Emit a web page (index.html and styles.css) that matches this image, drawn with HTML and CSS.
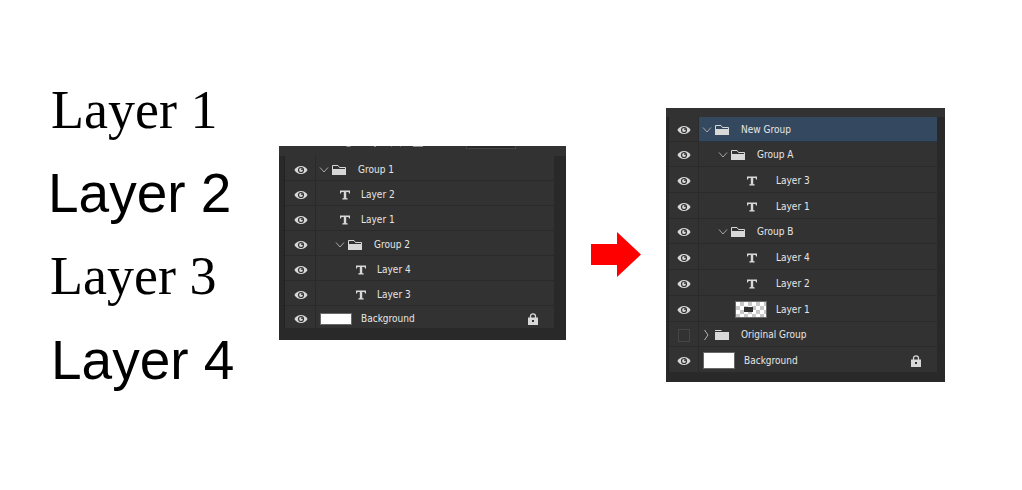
FILE: index.html
```html
<!DOCTYPE html>
<html lang="en">
<head>
<meta charset="utf-8">
<title>Layer groups</title>
<link rel="stylesheet" href="styles.css">
</head>
<body>
<svg class="defs" aria-hidden="true">
  <symbol id="eye" viewBox="0 0 14 10"><path fill="#d8d8d8" d="M.4 5C2 2.200 4.200 1 7 1S12 2.200 13.600 5C12 7.800 9.800 9 7 9S2 7.800.4 5Z"/><circle cx="7" cy="5" r="2.500" fill="#d8d8d8" stroke="#323232" stroke-width="1.200"/><circle cx="8" cy="4.200" r=".9" fill="#323232"/></symbol>
  <symbol id="down" viewBox="0 0 10 8"><path fill="none" stroke="#a8a8a8" d="M1 1.500 5 6 9 1.500"/></symbol>
  <symbol id="right" viewBox="0 0 10 12"><path fill="none" stroke="#b4b4b4" d="M2.500 1 6 6 2.500 11"/></symbol>
  <symbol id="open" viewBox="0 0 15 12"><path fill="none" stroke="#d8d8d8" d="M.5 11V1.500H6L7.500 3.500H13.500V11"/><path fill="#d8d8d8" d="M0 5h14v6H0z"/></symbol>
  <symbol id="closed" viewBox="0 0 15 12"><path fill="#d8d8d8" d="M0 1h6l1 1H0zM0 3h14v8H0z"/></symbol>
  <symbol id="type" viewBox="0 0 10 10"><path fill="#d8d8d8" d="M0 .5h10v3H9L8.500 2H6.200v6l1.500.4v1.100H2.300V8.400L3.800 8V2H1.500L1 3.500H0z"/></symbol>
  <symbol id="lock" viewBox="0 0 10 12"><path fill="none" stroke="#d8d8d8" stroke-width="1.300" d="M2.500 5V3.300a2.500 2.500 0 0 1 5 0V5"/><path fill="#d8d8d8" fill-rule="evenodd" d="M0 4.500h10V12H0zM4 7v2h2V7z"/></symbol>
</svg>
<main class="board">
  <section class="samples">
    <p class="serif">Layer 1</p>
    <p class="sans">Layer 2</p>
    <p class="serif third">Layer 3</p>
    <p class="sans fourth">Layer 4</p>
  </section>

  <section class="panel before" aria-label="Layers before">
    <div class="toolbar"><svg class="tools" width="180" height="6" viewBox="0 0 180 6" aria-hidden="true"><path fill="#8f8f8f" d="M67 0h5l-1 1h-3zM95 0h2v1h-2zM134 0h10v1h-10z"/><path fill="#696969" d="M112 0h1v1h-1zM121 0h1v1h-1z"/></svg><span class="opacity"></span></div>
    <ul class="rows">
      <li class="row"><button class="vis" aria-label="Toggle Group 1"><svg class="eye"><use href="#eye"/></svg></button><div class="name"><svg class="chev"><use href="#down"/></svg><svg class="folder"><use href="#open"/></svg>Group 1</div></li>
      <li class="row"><button class="vis" aria-label="Toggle Layer 2"><svg class="eye"><use href="#eye"/></svg></button><div class="name item d1"><span class="slot"><svg class="type"><use href="#type"/></svg></span>Layer 2</div></li>
      <li class="row"><button class="vis" aria-label="Toggle Layer 1"><svg class="eye"><use href="#eye"/></svg></button><div class="name item d1"><span class="slot"><svg class="type"><use href="#type"/></svg></span>Layer 1</div></li>
      <li class="row"><button class="vis" aria-label="Toggle Group 2"><svg class="eye"><use href="#eye"/></svg></button><div class="name d1"><svg class="chev"><use href="#down"/></svg><svg class="folder"><use href="#open"/></svg>Group 2</div></li>
      <li class="row"><button class="vis" aria-label="Toggle Layer 4"><svg class="eye"><use href="#eye"/></svg></button><div class="name item d2"><span class="slot"><svg class="type"><use href="#type"/></svg></span>Layer 4</div></li>
      <li class="row"><button class="vis" aria-label="Toggle Layer 3"><svg class="eye"><use href="#eye"/></svg></button><div class="name item d2"><span class="slot"><svg class="type"><use href="#type"/></svg></span>Layer 3</div></li>
      <li class="row base"><button class="vis" aria-label="Toggle Background"><svg class="eye"><use href="#eye"/></svg></button><div class="name item"><span class="thumb"></span>Background<svg class="lock"><use href="#lock"/></svg></div></li>
    </ul>
  </section>

  <svg class="arrow" width="50" height="46" viewBox="0 0 50 46" role="img" aria-label="becomes"><path fill="#f00" d="M0 12h26V0l24 22.500L26 45V33H0z"/></svg>

  <section class="panel after" aria-label="Layers after">
    <div class="toolbar"></div>
    <ul class="rows">
      <li class="row selected"><button class="vis" aria-label="Toggle New Group"><svg class="eye"><use href="#eye"/></svg></button><div class="name"><svg class="chev"><use href="#down"/></svg><svg class="folder"><use href="#open"/></svg>New Group</div></li>
      <li class="row"><button class="vis" aria-label="Toggle Group A"><svg class="eye"><use href="#eye"/></svg></button><div class="name d1"><svg class="chev"><use href="#down"/></svg><svg class="folder"><use href="#open"/></svg>Group A</div></li>
      <li class="row tall"><button class="vis" aria-label="Toggle Layer 3"><svg class="eye"><use href="#eye"/></svg></button><div class="name item d2"><span class="slot"><svg class="type"><use href="#type"/></svg></span>Layer 3</div></li>
      <li class="row tall"><button class="vis" aria-label="Toggle Layer 1"><svg class="eye"><use href="#eye"/></svg></button><div class="name item d2"><span class="slot"><svg class="type"><use href="#type"/></svg></span>Layer 1</div></li>
      <li class="row"><button class="vis" aria-label="Toggle Group B"><svg class="eye"><use href="#eye"/></svg></button><div class="name d1"><svg class="chev"><use href="#down"/></svg><svg class="folder"><use href="#open"/></svg>Group B</div></li>
      <li class="row tall"><button class="vis" aria-label="Toggle Layer 4"><svg class="eye"><use href="#eye"/></svg></button><div class="name item d2"><span class="slot"><svg class="type"><use href="#type"/></svg></span>Layer 4</div></li>
      <li class="row tall"><button class="vis" aria-label="Toggle Layer 2"><svg class="eye"><use href="#eye"/></svg></button><div class="name item d2"><span class="slot"><svg class="type"><use href="#type"/></svg></span>Layer 2</div></li>
      <li class="row tall"><button class="vis" aria-label="Toggle Layer 1 pixels"><svg class="eye"><use href="#eye"/></svg></button><div class="name item d2"><span class="thumb checker"><span class="blob"></span></span>Layer 1</div></li>
      <li class="row"><button class="vis" aria-label="Show Original Group"><span class="off"></span></button><div class="name"><svg class="chev shut"><use href="#right"/></svg><svg class="folder"><use href="#closed"/></svg>Original Group</div></li>
      <li class="row tall"><button class="vis" aria-label="Toggle Background"><svg class="eye"><use href="#eye"/></svg></button><div class="name item"><span class="thumb"></span>Background<svg class="lock"><use href="#lock"/></svg></div></li>
    </ul>
  </section>
</main>
</body>
</html>
```
FILE: styles.css
```css
* { box-sizing: border-box; }
body { margin: 0; background: #fff; color: #000; }
.defs { position: absolute; width: 0; height: 0; }

.board {
  display: grid;
  grid-template-columns: 279fr 287fr 100fr 279fr 77fr;
  align-items: start;
  padding-top: 69px;
}

/* Type specimens */
.samples { padding-left: 51px; }
.samples p { margin: 0; font-size: 55px; line-height: 83px; white-space: nowrap; }
.samples .serif { font-family: "Liberation Serif", "Times New Roman", serif; font-size: 54px; }
.samples .sans { font-family: "Liberation Sans", Arial, sans-serif; margin-left: -3px; }
.samples .third { line-height: 82px; margin-left: -1px; }
.samples .fourth { line-height: 86px; margin-left: 0; }

/* Layer panels */
.panel {
  display: flex;
  flex-direction: column;
  background: #292929;
  font: 10px/14px "DejaVu Sans Condensed", "DejaVu Sans", Tahoma, sans-serif;
  color: #e6e6e6;
}
.toolbar { background: #323232; }
.rows { list-style: none; margin: 0; padding: 0; border-left: 1px solid #222; }
.row { display: flex; height: 25px; background: #323232; }
.tall { height: 26px; }
.vis {
  display: flex;
  align-items: center;
  justify-content: center;
  width: 30px;
  padding: 2px 0 0 1px;
  border: solid #2a2a2a;
  border-width: 0 1px 1px 0;
  background: none;
}
.name {
  display: flex;
  flex: 1;
  align-items: center;
  padding-top: 2px;
  padding-left: 3px;
  border-bottom: 1px solid #2a2a2a;
  white-space: nowrap;
}
.d1 { padding-left: 19px; }
.item { padding-left: 4px; }
.item.d1 { padding-left: 20px; }
.item.d2 { padding-left: 36px; }

.eye { width: 14px; height: 10px; }
.chev { width: 10px; height: 8px; margin-right: 3px; }
.shut { height: 12px; }
.folder { width: 15px; height: 12px; margin-right: 11px; }
.type { width: 10px; height: 10px; }
.slot { display: flex; justify-content: center; width: 18px; margin-right: 7px; }
.lock { width: 10px; height: 12px; margin-left: auto; margin-right: 16px; }
.thumb {
  width: 32px;
  height: 12px;
  margin-right: 9px;
  border: 1px solid #686868;
  background: #fff;
}
.off { width: 12px; height: 13px; border: 1px solid #464646; }

.before { margin-top: 77px; padding-bottom: 11px; }
.before .toolbar { display: flex; justify-content: space-between; height: 10px; padding-right: 50px; }
.before .rows { margin: 0 12px 0 5px; }
.before .vis { width: 31px; padding-top: 4px; }
.before .name { padding-top: 4px; }
.before .base { height: 23px; }
.tools { flex: none; }
.opacity { width: 50px; height: 3px; flex: none; border: solid #454545; border-width: 0 1px 1px; background: #292929; }

.after { margin-top: 39px; padding-bottom: 9px; }
.after .toolbar { height: 9px; }
.after .rows { margin: 0 8px 0 2px; }
.after .slot { width: 34px; margin-right: 7px; }
.after .thumb { height: 17px; }
.selected .name { background: #34495f; border-bottom-color: #263544; }
.after .checker {
  display: flex;
  align-items: center;
  padding-left: 8px;
  background: repeating-conic-gradient(#c8c8c8 0 25%, #fff 0 50%) 0 0 / 8px 8px;
}
.blob { width: 9px; height: 5px; background: #303030; }

.arrow { margin: 163px 0 0 25px; }
```
